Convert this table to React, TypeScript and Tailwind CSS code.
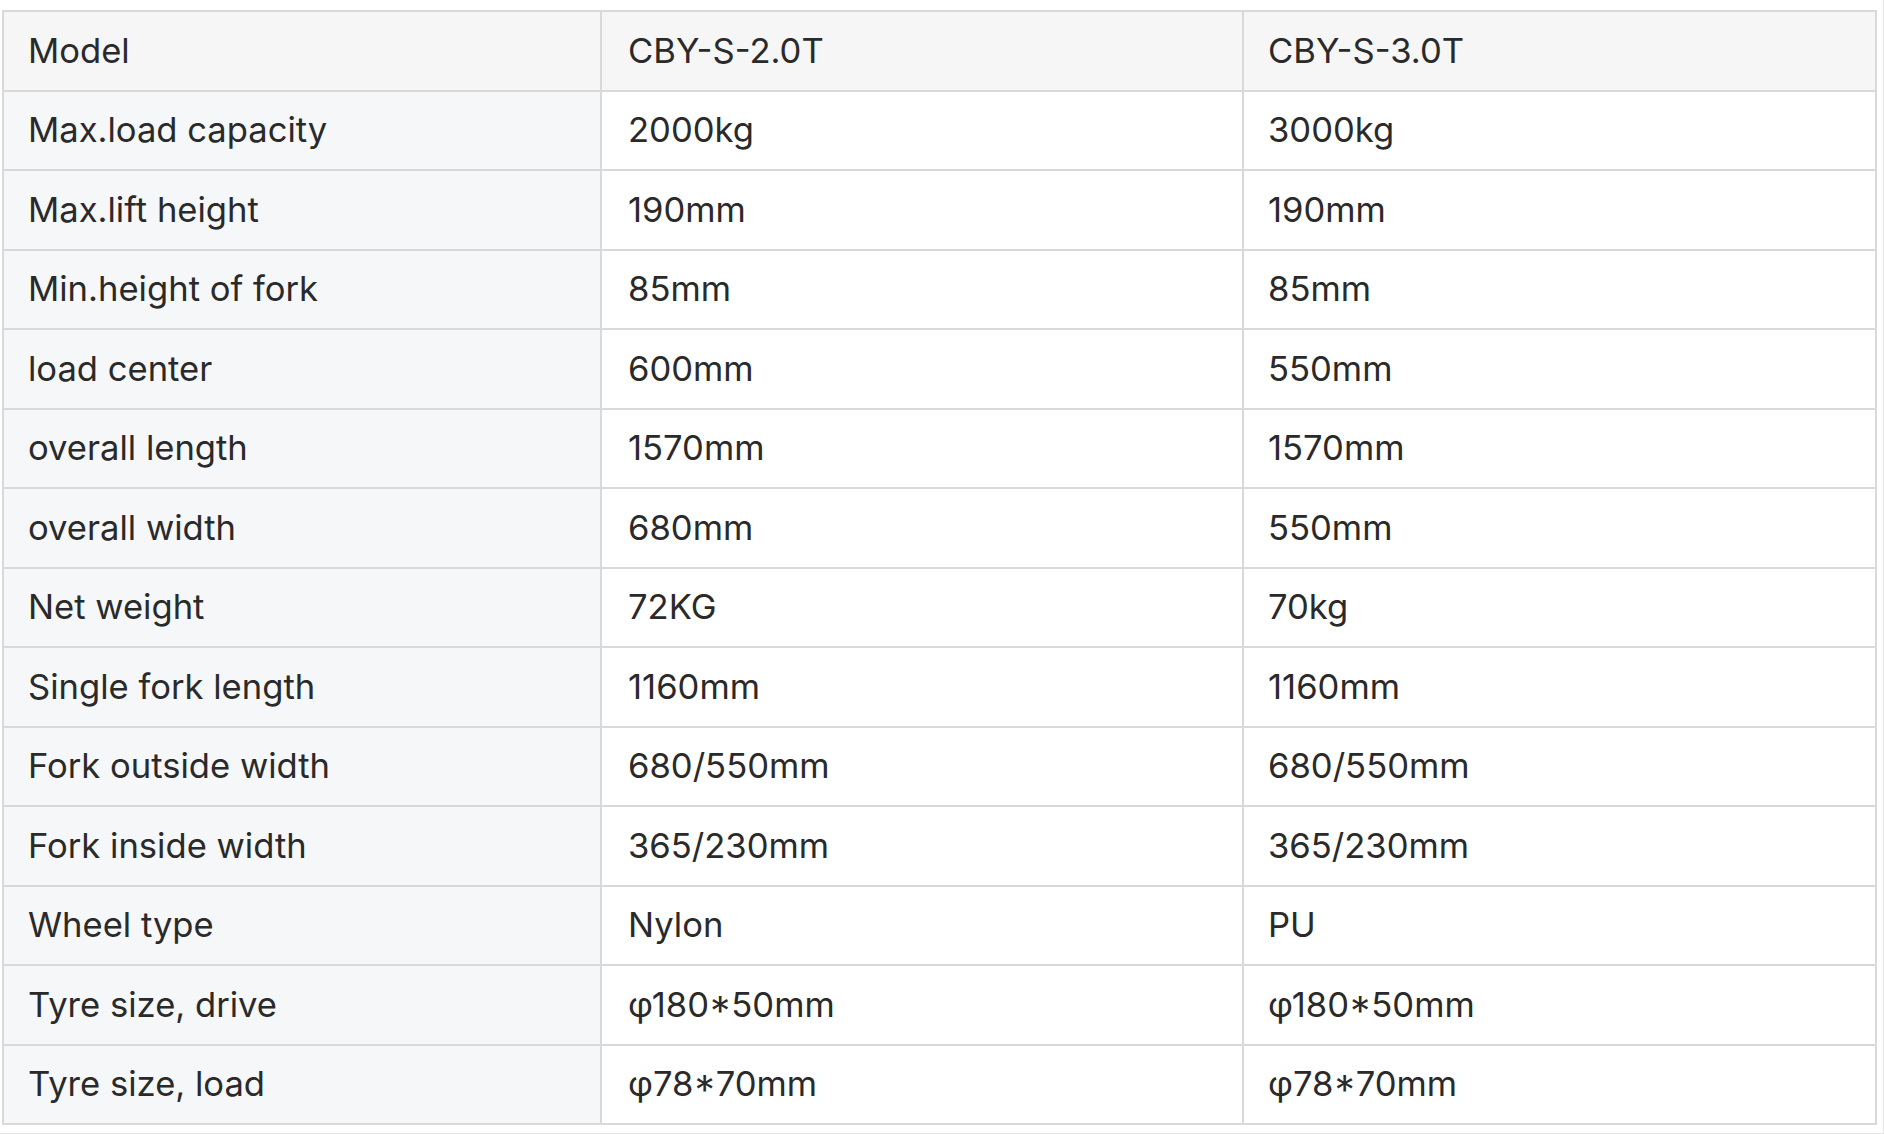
import React from "react";

const rows: [string, string, string][] = [
  ["Max.load capacity", "2000kg", "3000kg"],
  ["Max.lift height", "190mm", "190mm"],
  ["Min.height of fork", "85mm", "85mm"],
  ["load center", "600mm", "550mm"],
  ["overall length", "1570mm", "1570mm"],
  ["overall width", "680mm", "550mm"],
  ["Net weight", "72KG", "70kg"],
  ["Single fork length", "1160mm", "1160mm"],
  ["Fork outside width", "680/550mm", "680/550mm"],
  ["Fork inside width", "365/230mm", "365/230mm"],
  ["Wheel type", "Nylon", "PU"],
  ["Tyre size, drive", "φ180*50mm", "φ180*50mm"],
  ["Tyre size, load", "φ78*70mm", "φ78*70mm"],
];

export default function App() {
  return (
    <div
      className="w-[1884px] h-[1134px] bg-white border-r border-b border-[#e6e6e6] box-border pt-[10px] pl-[2px]"
      style={{ fontFamily: "Inter, 'Noto Sans', sans-serif" }}
    >
      <table className="table-fixed border-collapse w-[1873px] text-[34.6px] text-[#2a2a2a] leading-none">
        <colgroup>
          <col className="w-[598px]" />
          <col className="w-[642px]" />
          <col className="w-[633px]" />
        </colgroup>
        <thead>
          <tr className="h-[79.5px] bg-[#f6f6f6]">
            <th className="border-2 border-[#d9d9d9] pl-[24px] pb-[1px] text-left font-normal align-middle">Model</th>
            <th className="border-2 border-[#d9d9d9] pl-[26px] pb-[1px] text-left font-normal align-middle">CBY-S-2.0T</th>
            <th className="border-2 border-[#d9d9d9] pl-[24px] pb-[1px] text-left font-normal align-middle">CBY-S-3.0T</th>
          </tr>
        </thead>
        <tbody>
          {rows.map((r) => (
            <tr key={r[0]} className="h-[79.5px]">
              <td className="border-2 border-[#d9d9d9] pl-[24px] pb-[1px] bg-[#f6f7f9] align-middle">{r[0]}</td>
              <td className="border-2 border-[#d9d9d9] pl-[26px] pb-[1px] bg-white align-middle">{r[1]}</td>
              <td className="border-2 border-[#d9d9d9] pl-[24px] pb-[1px] bg-white align-middle">{r[2]}</td>
            </tr>
          ))}
        </tbody>
      </table>
    </div>
  );
}
